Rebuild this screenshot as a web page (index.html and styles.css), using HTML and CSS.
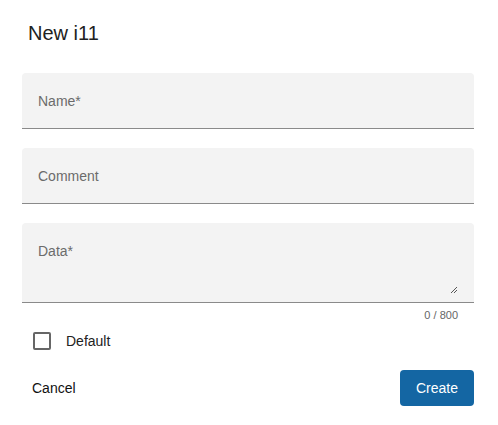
FILE: index.html
```html
<!DOCTYPE html>
<html>
<head>
<meta charset="utf-8">
<link rel="stylesheet" href="styles.css">
</head>
<body>
<div class="dialog">
  <h1 class="title">New i11</h1>
  <div class="fields">
    <div class="field"><span class="label">Name*</span></div>
    <div class="field"><span class="label">Comment</span></div>
    <div class="field area">
      <span class="label">Data*</span>
      <svg class="grip" width="8" height="8" viewBox="0 0 8 8"><path d="M1 7L7 1M4 7L7 4" stroke="#444" stroke-width="0.9" fill="none"/></svg>
    </div>
  </div>
  <div class="counter">0 / 800</div>
  <label class="check"><span class="box"></span><span class="check-label">Default</span></label>
  <div class="actions">
    <button class="btn-text">Cancel</button>
    <button class="btn-primary">Create</button>
  </div>
</div>
</body>
</html>
```

FILE: styles.css
```css
html, body {
  margin: 0;
  padding: 0;
  background: #fff;
}
body {
  font-family: "Liberation Sans", Arial, sans-serif;
  color: #222;
}
.dialog {
  width: 498px;
  height: 425px;
  box-sizing: border-box;
  padding: 20px 24px 0 22px;
}
.title {
  margin: 0 0 0 6px;
  font-size: 20px;
  font-weight: 400;
  line-height: 26px;
  color: #212121;
}
.fields {
  margin-top: 27px;
  display: flex;
  flex-direction: column;
  gap: 19px;
}
.field {
  position: relative;
  height: 55px;
  background: #f3f3f3;
  border-radius: 4px 4px 0 0;
  border-bottom: 1px solid #8a8a8a;
  box-sizing: content-box;
  display: flex;
  align-items: center;
  padding-left: 16px;
}
.field.area {
  height: 79px;
  align-items: flex-start;
}
.field.area .label {
  margin-top: 20px;
}
.label {
  font-size: 14px;
  color: #6b6b6b;
}
.grip {
  position: absolute;
  right: 16px;
  bottom: 8px;
}
.counter {
  text-align: right;
  font-size: 11px;
  color: #666;
  padding-right: 16px;
  margin-top: 6px;
  line-height: 13px;
}
.check {
  display: flex;
  align-items: center;
  margin-top: 10px;
  margin-left: 11px;
}
.box {
  width: 14px;
  height: 14px;
  border: 2px solid #666;
  border-radius: 2px;
}
.check-label {
  margin-left: 15px;
  font-size: 14px;
  color: #222;
}
.actions {
  margin-top: 20px;
  display: flex;
  justify-content: space-between;
  align-items: center;
}
.btn-text {
  border: 0;
  background: none;
  font-family: inherit;
  font-size: 14px;
  color: #111;
  padding: 0 0 0 10px;
}
.btn-primary {
  border: 0;
  background: #1466a3;
  color: #fff;
  font-family: inherit;
  font-size: 14px;
  width: 74px;
  height: 36px;
  border-radius: 4px;
}
```
